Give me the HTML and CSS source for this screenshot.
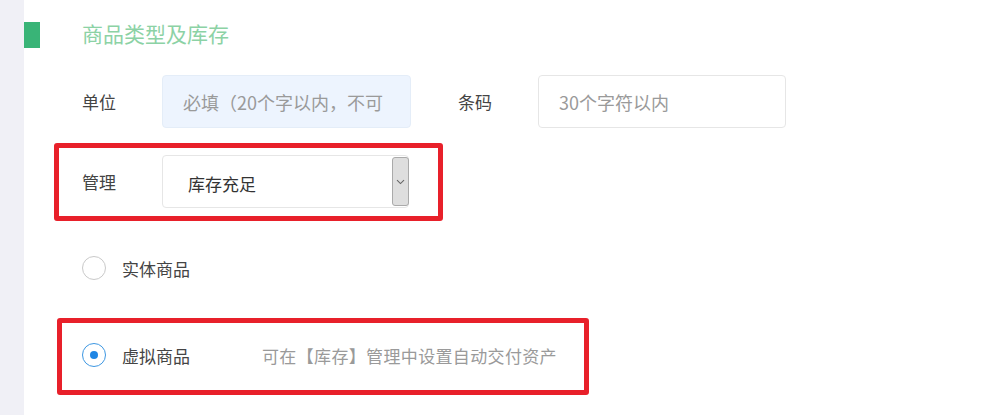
FILE: index.html
```html
<!DOCTYPE html>
<html lang="zh-CN">
<head>
    <meta charset="UTF-8">
    <meta name="viewport" content="width=device-width, initial-scale=1.0">
    <title>商品类型及库存</title>
    <link rel="stylesheet" href="styles.css">
</head>
<body>
    <div class="page">
        <aside class="rail"></aside>

        <main class="panel">
            <div class="section-head">
                <span class="mark"></span>
                <h2>商品类型及库存</h2>
            </div>

            <div class="form-body">
                <!-- unit / barcode -->
                <div class="field-row">
                    <label class="field-label">单位</label>
                    <input class="text-input filled" type="text" placeholder="必填（20个字以内，不可">
                    <label class="field-label second">条码</label>
                    <input class="text-input" type="text" placeholder="30个字符以内">
                </div>

                <!-- stock management -->
                <div class="mark-box manage">
                    <label class="field-label">管理</label>
                    <div class="select">
                        <span class="select-value">库存充足</span>
                        <span class="select-btn">
                            <svg width="9" height="6" viewBox="0 0 9 6">
                                <path d="M1 1.2 L4.5 4.6 L8 1.2" fill="none" stroke="#666" stroke-width="1.1"/>
                            </svg>
                        </span>
                    </div>
                </div>

                <!-- goods type -->
                <div class="radio-row plain">
                    <span class="radio"></span>
                    <span class="radio-label">实体商品</span>
                </div>

                <div class="mark-box virtual">
                    <span class="radio checked"></span>
                    <span class="radio-label">虚拟商品</span>
                    <span class="hint">可在【库存】管理中设置自动交付资产</span>
                </div>
            </div>
        </main>
    </div>
</body>
</html>
```

FILE: styles.css
```css
* {
    box-sizing: border-box;
}

body {
    margin: 0;
    background: #ffffff;
    font-family: "Noto Sans CJK SC", "Microsoft YaHei", sans-serif;
    color: #444;
}

.page {
    display: flex;
    height: 415px;
    overflow: hidden;
}

.rail {
    width: 24px;
    flex-shrink: 0;
    background: #f0f0f6;
}

.panel {
    flex: 1;
}

.section-head {
    display: flex;
    align-items: center;
    margin-top: 22px;
    height: 26px;
}

.mark {
    width: 16px;
    height: 26px;
    background: #39b477;
}

.section-head h2 {
    margin: 0 0 4px 42px;
    font-size: 21px;
    font-weight: normal;
    color: #8cd2a5;
    line-height: 26px;
}

.form-body {
    padding-left: 30px;
}

.field-row {
    display: flex;
    align-items: center;
    margin-top: 27px;
    padding-left: 28px;
}

.field-label {
    width: 80px;
    font-size: 17px;
    color: #444;
}

.field-label.second {
    margin-left: 47px;
}

.text-input {
    width: 248px;
    height: 53px;
    padding: 0 20px;
    border: 1px solid #e6e6e6;
    border-radius: 4px;
    background: #fff;
    font-family: inherit;
    font-size: 18px;
    outline: none;
}

.text-input.filled {
    width: 249px;
    background: #edf4fe;
    border-color: #e4edf8;
}

.text-input::placeholder {
    color: #9a9a9a;
}

.mark-box {
    display: flex;
    align-items: center;
    border: 5px solid #e8202a;
    border-radius: 3px;
}

.manage {
    width: 389px;
    margin-top: 15px;
    padding: 7px 0 8px 23px;
}

.select {
    display: flex;
    align-items: center;
    justify-content: space-between;
    width: 247px;
    height: 53px;
    padding: 1px 0 1px 25px;
    border: 1px solid #e6e6e6;
    border-radius: 4px;
    align-self: stretch;
}

.select-value {
    font-size: 17px;
    color: #333;
    padding-top: 3px;
}

.select-btn {
    display: flex;
    align-items: center;
    justify-content: center;
    width: 17px;
    height: 100%;
    background: #dedede;
    border: 1px solid #aaaaaa;
    border-radius: 3px;
    margin-right: -1px;
}

.radio-row {
    display: flex;
    align-items: center;
    height: 40px;
    margin-top: 27px;
    padding-left: 28px;
}

.radio {
    position: relative;
    width: 24px;
    height: 24px;
    flex-shrink: 0;
    border: 1px solid #c9c9c9;
    border-radius: 50%;
    background: #fff;
}

.radio.checked {
    border-color: #3d97e2;
}

.radio.checked::after {
    content: "";
    position: absolute;
    left: 7px;
    top: 7px;
    width: 8px;
    height: 8px;
    border-radius: 50%;
    background: #1f86e4;
}

.radio-label {
    margin-left: 16px;
    font-size: 17px;
    color: #444;
}

.virtual {
    width: 532px;
    height: 77px;
    margin: 30px 0 0 3px;
    padding: 0 0 3px 20px;
}

.virtual .radio-label {
    width: 140px;
}

.hint {
    font-size: 17px;
    letter-spacing: 0.35px;
    color: #9a9a9a;
}
```
